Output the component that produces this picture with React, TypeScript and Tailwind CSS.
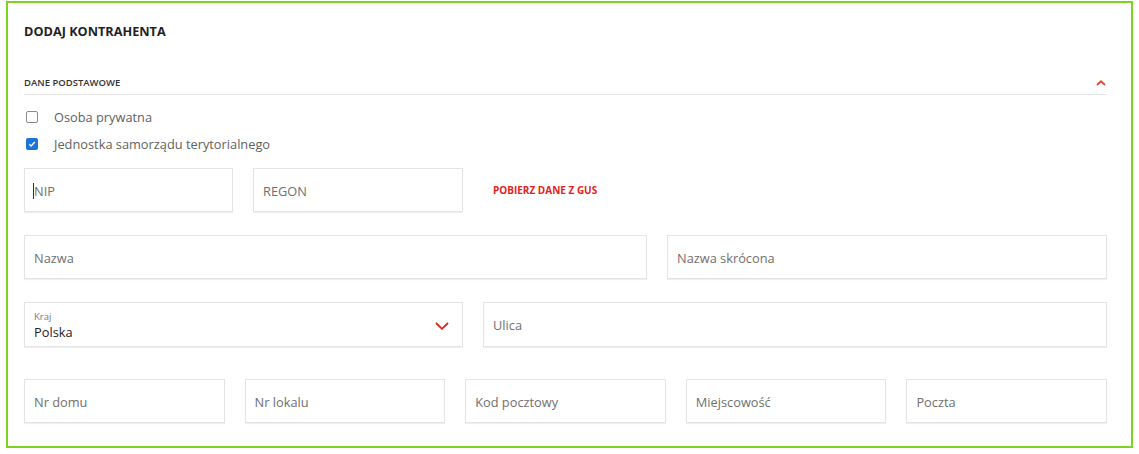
import React from "react";

function Field({ label, className = "" }: { label: string; className?: string }) {
  return (
    <div
      className={`h-[44px] border border-[#e4e4e4] shadow-[0_1px_1px_rgba(0,0,0,0.06)] flex items-center px-[9px] pt-[3px] text-[12.8px] text-[#6f6f6f] bg-white ${className}`}
    >
      {label}
    </div>
  );
}

function Checkbox({ label, checked }: { label: string; checked?: boolean }) {
  return (
    <label className="flex items-center h-[20px] text-[12.8px] text-[#5f5f5f]">
      {checked ? (
        <span className="w-[12px] h-[12px] ml-[2px] rounded-[2px] bg-[#1e73d9] flex items-center justify-center">
          <svg width="8" height="8" viewBox="0 0 8 8">
            <path d="M1.3 4.2 L3.2 6 L6.8 2" stroke="white" strokeWidth="1.4" fill="none" />
          </svg>
        </span>
      ) : (
        <span className="w-[12px] h-[12px] ml-[2px] rounded-[2px] border-[1.5px] border-[#8a8a8a] bg-white" />
      )}
      <span className="ml-[16px] pt-[1px]">{label}</span>
    </label>
  );
}

export default function App() {
  return (
    <div className="w-[1139px] h-[454px] bg-white pt-[1px] pl-[6px]" style={{ fontFamily: "'Open Sans', sans-serif" }}>
      <div className="w-[1127px] h-[447px] border-2 border-[#7ed321] pl-4 pr-6 pt-[19px]">
        <h1 className="text-[12.7px] leading-[18px] font-bold text-[#1f1f1f]">DODAJ KONTRAHENTA</h1>

        <div className="mt-[36px] flex items-center justify-between border-b border-[#e6e6e6] pb-1">
          <span className="text-[9.5px] leading-[14px] font-semibold text-[#333]">DANE PODSTAWOWE</span>
          <svg width="10" height="6" viewBox="0 0 10 6" className="mr-[1px]">
            <path d="M1 5 L5 1.3 L9 5" stroke="#e2452b" strokeWidth="1.8" fill="none" />
          </svg>
        </div>

        <div className="mt-[12px] flex flex-col gap-[7px]">
          <Checkbox label="Osoba prywatna" />
          <Checkbox label="Jednostka samorządu terytorialnego" checked />
        </div>

        <div className="mt-[14px] flex items-center gap-5">
          <div className="relative w-[209px]">
            <Field label="NIP" />
            <span className="absolute left-[9px] top-[15px] w-px h-[16px] bg-[#333]" />
          </div>
          <Field label="REGON" className="w-[210px]" />
          <span className="ml-[10px] text-[10px] font-bold text-[#e3231b]">POBIERZ DANE Z GUS</span>
        </div>

        <div className="mt-[23px] flex gap-5">
          <Field label="Nazwa" className="w-[623px]" />
          <Field label="Nazwa skrócona" className="flex-1" />
        </div>

        <div className="mt-[23px] flex gap-5">
          <div className="w-[439px] h-[45px] border border-[#e4e4e4] shadow-[0_1px_1px_rgba(0,0,0,0.06)] flex items-center justify-between pl-[9px] pr-[13px] pt-[2px]">
            <div className="flex flex-col">
              <span className="text-[9.5px] leading-[13px] text-[#7a7a7a]">Kraj</span>
              <span className="text-[12.8px] leading-[19px] text-[#222]">Polska</span>
            </div>
            <svg width="14" height="8" viewBox="0 0 14 8">
              <path d="M1 1 L7 6.8 L13 1" stroke="#d9261c" strokeWidth="1.8" fill="none" />
            </svg>
          </div>
          <Field label="Ulica" className="flex-1 h-[45px]" />
        </div>

        <div className="mt-[32px] grid grid-cols-5 gap-5">
          <Field label="Nr domu" />
          <Field label="Nr lokalu" />
          <Field label="Kod pocztowy" />
          <Field label="Miejscowość" />
          <Field label="Poczta" />
        </div>
      </div>
    </div>
  );
}
